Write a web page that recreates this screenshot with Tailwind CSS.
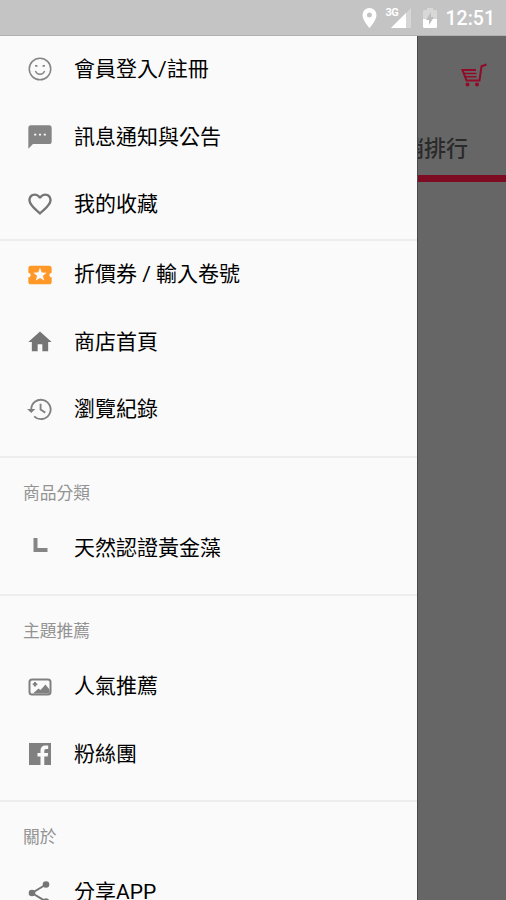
<!DOCTYPE html>
<html lang="zh-Hant">
<head>
<meta charset="utf-8">
<title>選單</title>
<script src="https://cdn.jsdelivr.net/npm/@tailwindcss/browser@4"></script>
</head>
<body class="w-[506px] h-[900px] overflow-hidden bg-[#666666] font-[Roboto,'Noto_Sans_CJK_TC',sans-serif] text-black">
<div class="flex h-[900px] flex-col">
  <header class="flex h-9 shrink-0 items-center justify-end bg-[#c4c4c4] border-b border-[#b2b2b2] pr-[11px] text-white">
    <svg class="mr-[9px] h-5 w-[15px]" viewBox="0 0 14 20" fill="currentColor"><path fill-rule="evenodd" d="M7 0a7 7 0 0 0-7 7c0 5.200 7 13 7 13s7-7.800 7-13a7 7 0 0 0-7-7zm0 9.500a2.500 2.500 0 1 1 0-5 2.500 2.500 0 0 1 0 5z"/></svg>
    <div class="relative mr-[11px] h-[21px] w-[26px]">
      <svg class="size-full" viewBox="0 0 26 21"><path d="M5 21 25 1v20z" fill="#fff" fill-opacity=".3"/><path d="M5 21 20 6v15z" fill="#fff"/></svg>
      <span class="absolute left-0 top-0 text-[11px] leading-[11px] font-bold tracking-[-0.5px]">3G</span>
    </div>
    <svg class="mr-[9px] h-5 w-[14px]" viewBox="0 0 14 20"><path d="M1 2h3V0h6v2h3l1 1v16l-1 1H1l-1-1V3z" fill="#fff" fill-opacity=".35"/><path d="M0 11h14v8l-1 1H1l-1-1z" fill="#fff"/><path d="M8 4v5h3l-5 8v-5H3z" fill="#bdbdbd"/></svg>
    <span class="pt-[2px] text-[19.500px] leading-[34px] font-medium">12:51</span>
  </header>
  <div class="flex min-h-0 flex-1">
    <nav class="flex w-[417px] shrink-0 flex-col overflow-hidden bg-[#fafafa] text-[21px] leading-[30px]">
      <section class="h-[205px] shrink-0 border-b-2 border-[#ededed]">
        <a class="flex h-[66px] items-center gap-5 pl-[26px]">
          <svg class="size-7 text-[#858585]" viewBox="0 0 24 24" fill="none" stroke="currentColor"><circle cx="12" cy="12" r="9.200" stroke-width="1.300"/><path d="M8 13.700c.8 2 2.300 2.800 4 2.800s3.200-.8 4-2.800" stroke-width="1.200"/><path d="M7.800 9.300h2M14.200 9.300h2" stroke-width="1.500"/></svg>
          <span class="-mt-px">會員登入/註冊</span></a>
        <a class="flex h-[68px] items-center gap-5 pl-[26px]">
          <svg class="mt-[2px] size-7 text-[#858585]" viewBox="0 0 24 24" fill="currentColor"><path d="M20 2H4c-1.100 0-1.990.9-1.990 2L2 22l4-4h14c1.100 0 2-.9 2-2V4c0-1.100-.9-2-2-2zM8.800 10.700H7V9.300h1.800v1.400zm4.100 0h-1.800V9.300h1.800v1.400zm4.100 0h-1.800V9.300H17v1.400z"/></svg>
          <span class="pt-px">訊息通知與公告</span></a>
        <a class="flex h-[67px] items-center gap-5 pl-[26px]">
          <svg class="size-7 text-[#757575]" viewBox="0 0 24 24" fill="currentColor"><path d="M16.500 3c-1.740 0-3.410.81-4.500 2.090C10.910 3.810 9.240 3 7.500 3 4.420 3 2 5.420 2 8.500c0 3.780 3.400 6.860 8.550 11.540L12 21.350l1.450-1.320C18.600 15.360 22 12.280 22 8.500 22 5.420 19.580 3 16.500 3zm-4.400 15.550l-.1.100-.1-.1C7.140 14.240 4 11.390 4 8.500 4 6.500 5.500 5 7.500 5c1.540 0 3.040.99 3.570 2.360h1.870C13.460 5.990 14.960 5 16.500 5c2 0 3.500 1.500 3.500 3.500 0 2.890-3.140 5.740-7.900 10.050z"/></svg>
          <span>我的收藏</span></a>
      </section>
      <section class="h-[217px] shrink-0 border-b-2 border-[#ededed]">
        <a class="flex h-[67px] items-center gap-5 pl-[26px]">
          <svg class="size-7 text-[#ff9826]" viewBox="0 0 24 24" fill="currentColor"><path d="M20 12c0-1.100.9-2 2-2V6c0-1.100-.9-2-2-2H4c-1.100 0-1.990.9-1.990 2v4c1.100 0 1.990.9 1.990 2s-.89 2-2 2v4c0 1.100.9 2 2 2h16c1.100 0 2-.9 2-2v-4c-1.100 0-2-.9-2-2zm-4.420 4.800L12 14.500l-3.580 2.300 1.080-4.120-3.290-2.690 4.240-.25L12 5.800l1.540 3.950 4.240.25-3.290 2.690 1.090 4.110z"/></svg>
          <span class="-mt-px">折價券 / 輸入卷號</span></a>
        <a class="flex h-[68px] items-center gap-5 pl-[26px]">
          <svg class="size-7 text-[#757575]" viewBox="0 0 24 24" fill="currentColor"><path d="M10 20v-6h4v6h5v-8h3L12 3 2 12h3v8z"/></svg>
          <span>商店首頁</span></a>
        <a class="flex h-[67px] items-center gap-5 pl-[26px]">
          <svg class="-mt-px size-7 text-[#808080]" viewBox="0 0 24 24" fill="none" stroke="currentColor" stroke-width="1.600"><path d="M4.500 12.500A8.300 8.300 0 1 1 7 18.300"/><path d="M12.500 7.500v5l4 2.600"/><path d="M1 12h7l-3.500 3.500z" fill="currentColor" stroke="none"/></svg>
          <span class="-mt-px">瀏覽紀錄</span></a>
      </section>
      <section class="h-[138px] shrink-0 border-b-2 border-[#ededed]">
        <h2 class="h-[55px] pl-[23px] pt-[20px] text-[16.800px] text-[#939393]">商品分類</h2>
        <a class="flex h-[67px] items-center gap-5 pl-[26px]">
          <svg class="size-7 text-[#858585]" viewBox="0 0 28 28"><path d="M9.500 5v12H21.500" fill="none" stroke="currentColor" stroke-width="4"/></svg>
          <span class="pt-[2px]">天然認證黃金藻</span></a>
      </section>
      <section class="h-[206px] shrink-0 border-b-2 border-[#ededed]">
        <h2 class="h-[56px] pl-[23px] pt-[20px] text-[16.800px] text-[#939393]">主題推薦</h2>
        <a class="flex h-[67px] items-center gap-5 pl-[26px]">
          <svg class="mt-[2px] size-7 text-[#808080]" viewBox="0 0 28 28"><rect x="3.500" y="6.500" width="21" height="15" rx="2.500" fill="none" stroke="currentColor" stroke-width="2"/><path d="M7 20.500l5.500-5 2 1.500 5-5.500 1.500 2 2.500 3v4z" fill="currentColor"/><path d="M9 9v4.500M6.800 11.200h4.500" stroke="currentColor" stroke-width="2"/></svg>
          <span>人氣推薦</span></a>
        <a class="flex h-[68px] items-center gap-5 pl-[26px]">
          <svg class="mt-[2px] size-7 text-[#808080]" viewBox="0 0 28 28" fill="currentColor"><path fill-rule="evenodd" d="M3 3h22v22H3zM14.500 25v-8.500H11.500v-3.500h3v-2.200c0-3.300 1.600-5.300 4.700-5.300h3v3.500h-1.900c-1.500 0-2 .7-2 1.900v2.100h3.900l-.6 3.500h-3.300V25z"/></svg>
          <span class="pt-px">粉絲團</span></a>
      </section>
      <section class="shrink-0">
        <h2 class="h-[56px] pl-[23px] pt-[20px] text-[16.800px] text-[#939393]">關於</h2>
        <a class="flex h-[67px] items-center gap-5 pl-[26px]">
          <svg class="mt-[2px] size-7 text-[#757575]" viewBox="0 0 28 28"><g fill="currentColor"><circle cx="20" cy="5.500" r="3.300"/><circle cx="6" cy="14" r="3.300"/><circle cx="20" cy="22.500" r="3.300"/></g><path d="M20 5.500 6 14 20 22.500" fill="none" stroke="currentColor" stroke-width="2"/></svg>
          <span>分享APP</span></a>
      </section>
    </nav>
    <main class="flex-1 overflow-hidden border-l border-[#484848] bg-[#666666]">
      <div class="flex h-[78px] justify-end pr-[19px] pt-[27px]">
        <svg class="h-6 w-[27px]" viewBox="0 0 27 24" fill="none" stroke="#900c28" stroke-width="2"><path d="M26.500 1.500l-5 1.800-2 14.200H6.500L2.500 7H16"/><path d="M4 10.500h12.500M5 13.700h11.500" stroke-width="1.600"/><circle cx="7.500" cy="21.500" r="1" fill="#900c28"/><circle cx="17" cy="21.500" r="1" fill="#900c28"/></svg>
      </div>
      <div class="flex h-[68px] justify-end overflow-hidden border-b-[7px] border-[#7d0b22] pr-[38px] pt-[19px]">
        <span class="whitespace-nowrap text-[22px] leading-[32px] font-medium text-[#2a2a2a]">銷排行</span>
      </div>
    </main>
  </div>
</div>
</body>
</html>
